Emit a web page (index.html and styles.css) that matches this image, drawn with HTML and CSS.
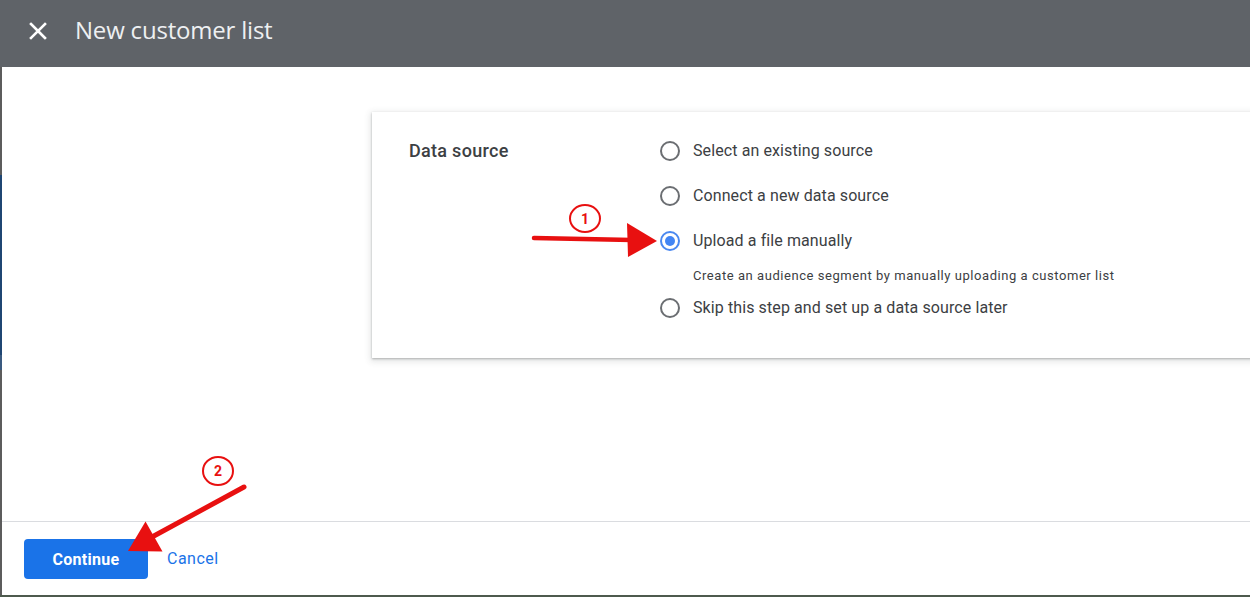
FILE: index.html
```html
<!DOCTYPE html>
<html>
<head>
<meta charset="utf-8">
<link rel="stylesheet" href="styles.css">
</head>
<body>
<div class="page">
  <header class="topbar">
    <svg class="close" width="18" height="18" viewBox="0 0 18 18"><path d="M2 2 L16 16 M16 2 L2 16" stroke="#ffffff" stroke-width="2.6" stroke-linecap="square"/></svg>
    <span class="title">New customer list</span>
  </header>
  <div class="below">
    <div class="edge"></div>
    <main class="main">
      <section class="content">
        <div class="card">
          <div class="field-label">Data source</div>
          <div class="options">
            <div class="option"><span class="radio"></span><span class="opt-text">Select an existing source</span></div>
            <div class="option"><span class="radio"></span><span class="opt-text">Connect a new data source</span></div>
            <div class="option"><span class="radio checked"></span><span class="opt-text">Upload a file manually</span></div>
            <div class="hint">Create an audience segment by manually uploading a customer list</div>
            <div class="option last"><span class="radio"></span><span class="opt-text">Skip this step and set up a data source later</span></div>
          </div>
        </div>
      </section>
      <footer class="footer">
        <button class="btn-primary">Continue</button>
        <a class="btn-link">Cancel</a>
      </footer>
    </main>
  </div>
  <div class="bottom-edge"></div>
  <svg class="annot" width="1250" height="597" viewBox="0 0 1250 597">
    <ellipse cx="585" cy="218.5" rx="15" ry="13.5" fill="#fff" stroke="#e81010" stroke-width="2"/>
    <text x="585" y="223.5" text-anchor="middle" class="annot-num">1</text>
    <line x1="534" y1="238" x2="632" y2="240" stroke="#e81010" stroke-width="4.5" stroke-linecap="round"/>
    <polygon points="627,223 657,241 628,257" fill="#e81010"/>
    <ellipse cx="218" cy="471" rx="15" ry="14" fill="#fff" stroke="#e81010" stroke-width="2"/>
    <text x="218" y="476" text-anchor="middle" class="annot-num">2</text>
    <line x1="244" y1="487" x2="152" y2="537" stroke="#e81010" stroke-width="5" stroke-linecap="round"/>
    <polygon points="145.5,521.5 162.5,551.5 128,551" fill="#e81010"/>
  </svg>
</div>
</body>
</html>
```
FILE: styles.css
```css
* { box-sizing: border-box; }
html, body { margin: 0; padding: 0; }
body {
  width: 1250px;
  height: 597px;
  overflow: hidden;
  background: #ffffff;
  font-family: Roboto, "Liberation Sans", Arial, sans-serif;
  color: #3c4043;
}
.page {
  position: relative;
  width: 1250px;
  height: 597px;
  display: flex;
  flex-direction: column;
  overflow: hidden;
}
.topbar {
  height: 67px;
  flex: none;
  background: #5f6368;
  display: flex;
  align-items: center;
  padding-left: 29px;
}
.close { display: block; margin-right: 28px; margin-top: -6px; }
.title {
  font-family: "Open Sans", Roboto, sans-serif;
  font-size: 24px;
  color: #eef0f2;
  letter-spacing: -0.2px;
  margin-top: -9px;
}
.below {
  flex: 1;
  display: flex;
  min-height: 0;
}
.edge {
  width: 2px;
  flex: none;
  background: linear-gradient(to bottom, #5c5c5c 0px, #5c5c5c 108px, #1f4673 108px, #1f4673 288px, #3a5a80 288px, #3a5a80 303px, #5c5c5c 303px);
}
.main {
  flex: 1;
  display: flex;
  flex-direction: column;
  min-width: 0;
}
.content {
  flex: 1;
  padding-top: 45px;
  padding-left: 370px;
  overflow: hidden;
}
.card {
  width: 1000px;
  height: 246px;
  background: #fff;
  box-shadow: 0 1px 2px rgba(60,64,67,.35), 0 2px 6px 2px rgba(60,64,67,.12);
  display: flex;
  padding: 29px 0 0 37px;
}
.field-label {
  width: 251px;
  flex: none;
  font-size: 18px;
  font-weight: 500;
  letter-spacing: 0.3px;
  color: #3c4043;
  line-height: 20px;
}
.options { display: flex; flex-direction: column; }
.option {
  display: flex;
  align-items: center;
  height: 20px;
  margin-bottom: 25px;
}
.option.last { margin-bottom: 0; }
.radio {
  width: 20px;
  height: 20px;
  border-radius: 50%;
  border: 2px solid #6b6e72;
  flex: none;
  margin-right: 13px;
  position: relative;
}
.radio.checked { border-color: #4a88f0; }
.radio.checked::after {
  content: "";
  position: absolute;
  left: 3px;
  top: 3px;
  width: 10px;
  height: 10px;
  border-radius: 50%;
  background: #4285f4;
}
.opt-text { font-size: 16px; letter-spacing: 0.1px; color: #3c4043; line-height: 20px; }
.hint {
  font-size: 13px;
  letter-spacing: 0.55px;
  line-height: 16px;
  color: #3c4043;
  padding-left: 33px;
  margin-top: -8px;
  margin-bottom: 14px;
}
.footer {
  height: 74px;
  flex: none;
  border-top: 1px solid #dadce0;
  display: flex;
  align-items: flex-start;
  padding: 17px 0 0 22px;
}
.btn-primary {
  width: 124px;
  height: 40px;
  border: none;
  border-radius: 4px;
  background: #1a73e8;
  color: #fff;
  font-family: Roboto, sans-serif;
  font-size: 16px;
  font-weight: 700;
  letter-spacing: 0.3px;
  padding: 0;
}
.btn-link {
  font-size: 16px;
  letter-spacing: 0.5px;
  color: #1a73e8;
  margin-left: 19px;
  line-height: 40px;
}
.bottom-edge {
  height: 2px;
  flex: none;
  background: #4d5a4d;
}
.annot {
  position: absolute;
  left: 0;
  top: 0;
  pointer-events: none;
}
.annot-num {
  font-family: Roboto, sans-serif;
  font-size: 14px;
  font-weight: 700;
  fill: #e81010;
}
```
